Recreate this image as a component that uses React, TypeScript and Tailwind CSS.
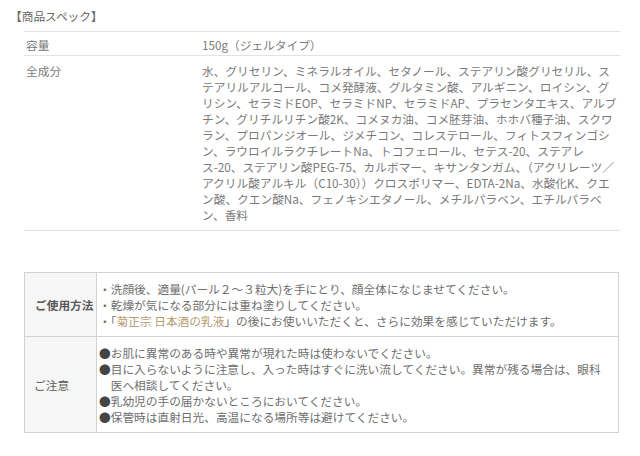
const INGREDIENTS = [
  '水、グリセリン、ミネラルオイル、セタノール、ステアリン酸グリセリル、ス',
  'テアリルアルコール、コメ発酵液、グルタミン酸、アルギニン、ロイシン、グ',
  'リシン、セラミドEOP、セラミドNP、セラミドAP、プラセンタエキス、アルブ',
  'チン、グリチルリチン酸2K、コメヌカ油、コメ胚芽油、ホホバ種子油、スクワ',
  'ラン、プロパンジオール、ジメチコン、コレステロール、フィトスフィンゴシ',
  'ン、ラウロイルラクチレートNa、トコフェロール、セテス-20、ステアレ',
  'ス-20、ステアリン酸PEG-75、カルボマー、キサンタンガム、（アクリレーツ／',
  'アクリル酸アルキル（C10-30））クロスポリマー、EDTA-2Na、水酸化K、クエ',
  'ン酸、クエン酸Na、フェノキシエタノール、メチルパラベン、エチルパラベ',
  'ン、香料',
];

const CAUTIONS = [
  ['お肌に異常のある時や異常が現れた時は使わないでください。'],
  ['目に入らないように注意し、入った時はすぐに洗い流してください。異常が残る場合は、眼科', '医へ相談してください。'],
  ['乳幼児の手の届かないところにおいてください。'],
  ['保管時は直射日光、高温になる場所等は避けてください。'],
];

export default function App() {
  return (
    <div className="w-[640px] h-[456px] bg-white text-[#7a7a7a] text-[11.7px] leading-[16px] font-['Noto_Sans_CJK_JP','Noto_Sans',sans-serif]">
      {/* spec heading */}
      <div className="pt-[8px] pl-[10px] text-[#666]">【商品スペック】</div>

      {/* spec table */}
      <div className="mt-[7px] ml-[24px] w-[596px] border-b border-[#e3e3e3]">
        <div className="grid grid-cols-[178px_1fr] border-t border-[#e3e3e3] pt-[5px] pb-[2px]">
          <div className="pl-[2px]">容量</div>
          <div>150g（ジェルタイプ）</div>
        </div>
        <div className="grid grid-cols-[178px_1fr] border-t border-[#e3e3e3] pt-[7px] pb-[7px]">
          <div className="pl-[2px]">全成分</div>
          <div className="whitespace-nowrap">
            {INGREDIENTS.map((line, i) => (
              <div key={i}>{line}</div>
            ))}
          </div>
        </div>
      </div>

      {/* usage / caution table */}
      <div className="mt-[41px] ml-[24px] w-[595px] border border-[#d2d2d2] text-[#6e6e6e]">
        <div className="flex border-b border-[#d2d2d2]">
          <div className="w-[72px] shrink-0 flex items-center pl-[10px] bg-[#f6f6f6] border-r border-[#d2d2d2] font-bold text-[#5a5a5a] whitespace-nowrap">
            ご使用方法
          </div>
          <div className="pl-[2px] pt-[8px] pb-[7px] whitespace-nowrap">
            <div>・洗顔後、適量(パール２～３粒大)を手にとり、顔全体になじませてください。</div>
            <div>・乾燥が気になる部分には重ね塗りしてください。</div>
            <div>
              ・「<span className="text-[#b79a70]">菊正宗 日本酒の乳液</span>」の後にお使いいただくと、さらに効果を感じていただけます。
            </div>
          </div>
        </div>
        <div className="flex">
          <div className="w-[72px] shrink-0 flex items-center pl-[9px] bg-[#f6f6f6] border-r border-[#d2d2d2] text-[#5a5a5a]">
            ご注意
          </div>
          <div className="pl-[2px] pt-[8px] pb-[7px] whitespace-nowrap">
            {CAUTIONS.map((lines, i) => (
              <div key={i} className="flex">
                <span className="w-[11.7px] shrink-0 text-[#444]">●</span>
                <span>
                  {lines.map((l, j) => (
                    <div key={j}>{l}</div>
                  ))}
                </span>
              </div>
            ))}
          </div>
        </div>
      </div>
    </div>
  );
}
